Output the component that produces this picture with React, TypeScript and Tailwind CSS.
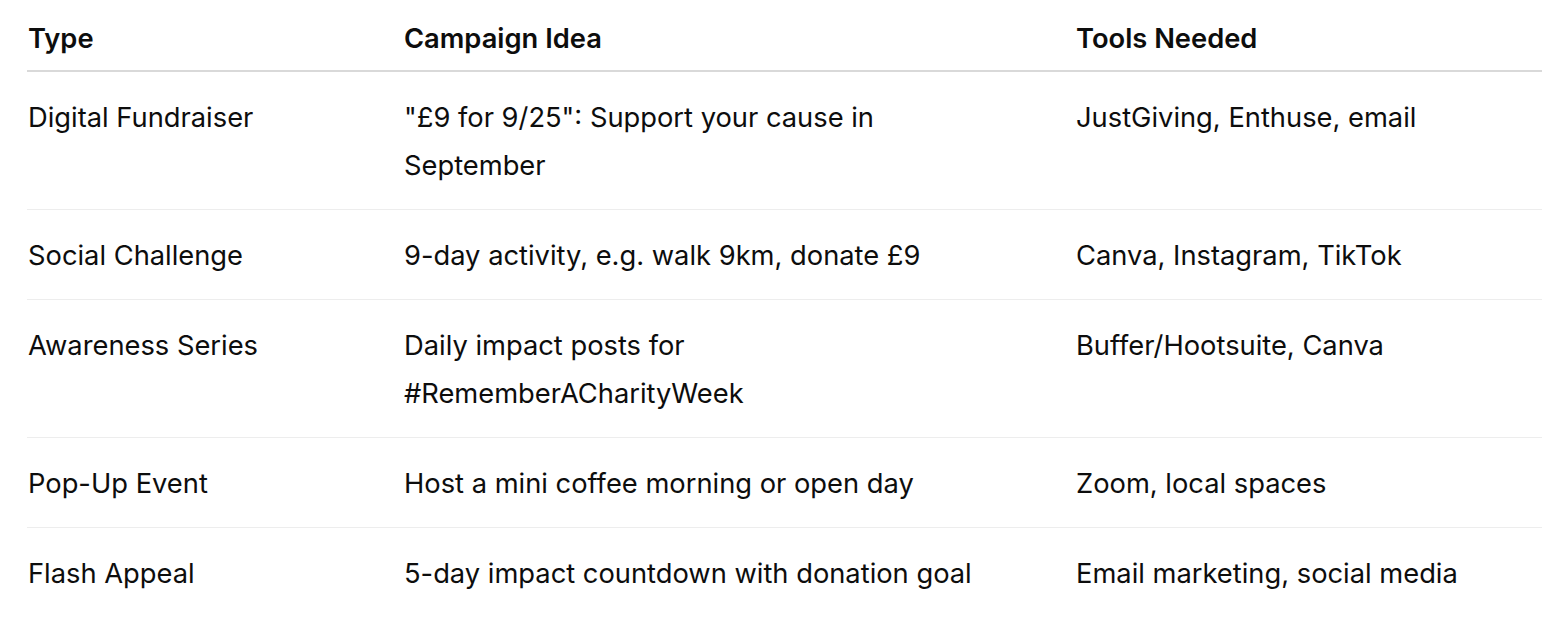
import React from 'react'

type Row = {
  type: string
  idea: string
  tools: string
}

const ROWS: Row[] = [
  { type: 'Digital Fundraiser', idea: '"£9 for 9/25": Support your cause in September', tools: 'JustGiving, Enthuse, email' },
  { type: 'Social Challenge', idea: '9-day activity, e.g. walk 9km, donate £9', tools: 'Canva, Instagram, TikTok' },
  { type: 'Awareness Series', idea: 'Daily impact posts for #RememberACharityWeek', tools: 'Buffer/Hootsuite, Canva' },
  { type: 'Pop-Up Event', idea: 'Host a mini coffee morning or open day', tools: 'Zoom, local spaces' },
  { type: 'Flash Appeal', idea: '5-day impact countdown with donation goal', tools: 'Email marketing, social media' },
]

export default function App() {
  return (
    <div className="min-h-screen w-full bg-white pl-[27px] font-['Inter',_'Noto_Sans',_sans-serif] text-[#0d0d0d]">
      <table className="w-full border-collapse text-left text-[27.3px] leading-[48px]">
        <thead>
          <tr className="border-b-2 border-[#d9d9d9]">
            <th className="w-[377px] pt-[15px] pb-[7px] pl-px font-semibold">Type</th>
            <th className="w-[672px] pt-[15px] pb-[7px] font-semibold">Campaign Idea</th>
            <th className="pt-[15px] pb-[7px] font-semibold">Tools Needed</th>
          </tr>
        </thead>
        <tbody>
          {ROWS.map((r, i) => (
            <tr
              key={r.type}
              className={i < ROWS.length - 1 ? 'border-b border-[#ededed]' : ''}
            >
              <td className="pt-[21.5px] pb-[19.5px] pl-px align-top font-normal">{r.type}</td>
              <td className="pt-[21.5px] pb-[19.5px] align-top">
                <div className="max-w-[592px]">{r.idea}</div>
              </td>
              <td className="pt-[21.5px] pb-[19.5px] align-top">{r.tools}</td>
            </tr>
          ))}
        </tbody>
      </table>
    </div>
  )
}
